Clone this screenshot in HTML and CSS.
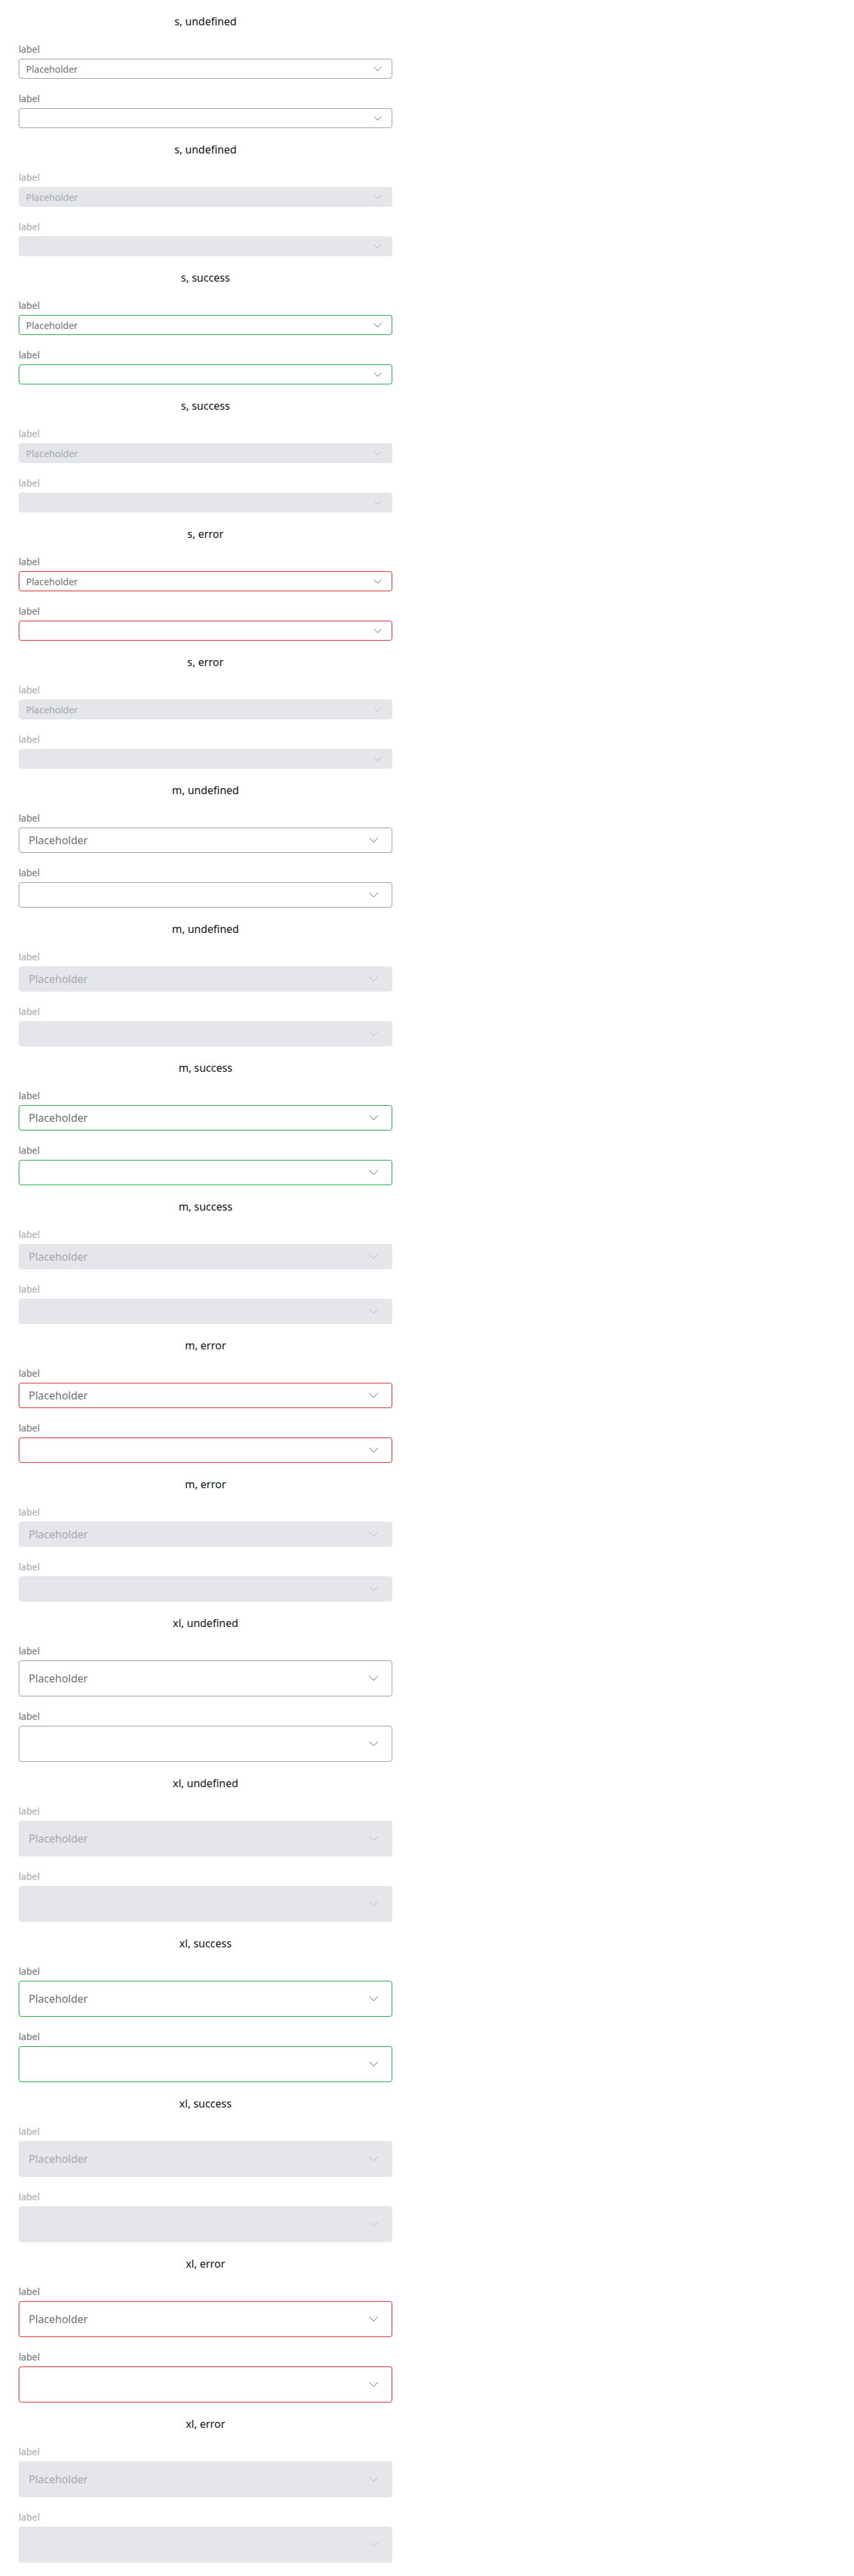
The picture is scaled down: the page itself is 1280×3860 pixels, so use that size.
FILE: index.html
```html
<!DOCTYPE html>
<html lang="en">
<head>
<meta charset="utf-8">
<title>Select variants</title>
<link rel="stylesheet" href="styles.css">
</head>
<body>
<main class="page">

<section class="group size-s">
  <h2 class="title">s, undefined</h2>
  <div class="field"><span class="label">label</span><div class="select"><span class="value">Placeholder</span><svg class="chev" viewBox="0 0 12 7"><polyline points="0.5,0.5 6,6 11.5,0.5"/></svg></div></div>
  <div class="field"><span class="label">label</span><div class="select"><span class="value"></span><svg class="chev" viewBox="0 0 12 7"><polyline points="0.5,0.5 6,6 11.5,0.5"/></svg></div></div>
</section>
<section class="group size-s disabled">
  <h2 class="title">s, undefined</h2>
  <div class="field"><span class="label">label</span><div class="select"><span class="value">Placeholder</span><svg class="chev" viewBox="0 0 12 7"><polyline points="0.5,0.5 6,6 11.5,0.5"/></svg></div></div>
  <div class="field"><span class="label">label</span><div class="select"><span class="value"></span><svg class="chev" viewBox="0 0 12 7"><polyline points="0.5,0.5 6,6 11.5,0.5"/></svg></div></div>
</section>
<section class="group size-s success">
  <h2 class="title">s, success</h2>
  <div class="field"><span class="label">label</span><div class="select"><span class="value">Placeholder</span><svg class="chev" viewBox="0 0 12 7"><polyline points="0.5,0.5 6,6 11.5,0.5"/></svg></div></div>
  <div class="field"><span class="label">label</span><div class="select"><span class="value"></span><svg class="chev" viewBox="0 0 12 7"><polyline points="0.5,0.5 6,6 11.5,0.5"/></svg></div></div>
</section>
<section class="group size-s success disabled">
  <h2 class="title">s, success</h2>
  <div class="field"><span class="label">label</span><div class="select"><span class="value">Placeholder</span><svg class="chev" viewBox="0 0 12 7"><polyline points="0.5,0.5 6,6 11.5,0.5"/></svg></div></div>
  <div class="field"><span class="label">label</span><div class="select"><span class="value"></span><svg class="chev" viewBox="0 0 12 7"><polyline points="0.5,0.5 6,6 11.5,0.5"/></svg></div></div>
</section>
<section class="group size-s error">
  <h2 class="title">s, error</h2>
  <div class="field"><span class="label">label</span><div class="select"><span class="value">Placeholder</span><svg class="chev" viewBox="0 0 12 7"><polyline points="0.5,0.5 6,6 11.5,0.5"/></svg></div></div>
  <div class="field"><span class="label">label</span><div class="select"><span class="value"></span><svg class="chev" viewBox="0 0 12 7"><polyline points="0.5,0.5 6,6 11.5,0.5"/></svg></div></div>
</section>
<section class="group size-s error disabled">
  <h2 class="title">s, error</h2>
  <div class="field"><span class="label">label</span><div class="select"><span class="value">Placeholder</span><svg class="chev" viewBox="0 0 12 7"><polyline points="0.5,0.5 6,6 11.5,0.5"/></svg></div></div>
  <div class="field"><span class="label">label</span><div class="select"><span class="value"></span><svg class="chev" viewBox="0 0 12 7"><polyline points="0.5,0.5 6,6 11.5,0.5"/></svg></div></div>
</section>

<section class="group size-m">
  <h2 class="title">m, undefined</h2>
  <div class="field"><span class="label">label</span><div class="select"><span class="value">Placeholder</span><svg class="chev" viewBox="0 0 14 8"><polyline points="0.5,0.5 7,7 13.5,0.5"/></svg></div></div>
  <div class="field"><span class="label">label</span><div class="select"><span class="value"></span><svg class="chev" viewBox="0 0 14 8"><polyline points="0.5,0.5 7,7 13.5,0.5"/></svg></div></div>
</section>
<section class="group size-m disabled">
  <h2 class="title">m, undefined</h2>
  <div class="field"><span class="label">label</span><div class="select"><span class="value">Placeholder</span><svg class="chev" viewBox="0 0 14 8"><polyline points="0.5,0.5 7,7 13.5,0.5"/></svg></div></div>
  <div class="field"><span class="label">label</span><div class="select"><span class="value"></span><svg class="chev" viewBox="0 0 14 8"><polyline points="0.5,0.5 7,7 13.5,0.5"/></svg></div></div>
</section>
<section class="group size-m success">
  <h2 class="title">m, success</h2>
  <div class="field"><span class="label">label</span><div class="select"><span class="value">Placeholder</span><svg class="chev" viewBox="0 0 14 8"><polyline points="0.5,0.5 7,7 13.5,0.5"/></svg></div></div>
  <div class="field"><span class="label">label</span><div class="select"><span class="value"></span><svg class="chev" viewBox="0 0 14 8"><polyline points="0.5,0.5 7,7 13.5,0.5"/></svg></div></div>
</section>
<section class="group size-m success disabled">
  <h2 class="title">m, success</h2>
  <div class="field"><span class="label">label</span><div class="select"><span class="value">Placeholder</span><svg class="chev" viewBox="0 0 14 8"><polyline points="0.5,0.5 7,7 13.5,0.5"/></svg></div></div>
  <div class="field"><span class="label">label</span><div class="select"><span class="value"></span><svg class="chev" viewBox="0 0 14 8"><polyline points="0.5,0.5 7,7 13.5,0.5"/></svg></div></div>
</section>
<section class="group size-m error">
  <h2 class="title">m, error</h2>
  <div class="field"><span class="label">label</span><div class="select"><span class="value">Placeholder</span><svg class="chev" viewBox="0 0 14 8"><polyline points="0.5,0.5 7,7 13.5,0.5"/></svg></div></div>
  <div class="field"><span class="label">label</span><div class="select"><span class="value"></span><svg class="chev" viewBox="0 0 14 8"><polyline points="0.5,0.5 7,7 13.5,0.5"/></svg></div></div>
</section>
<section class="group size-m error disabled">
  <h2 class="title">m, error</h2>
  <div class="field"><span class="label">label</span><div class="select"><span class="value">Placeholder</span><svg class="chev" viewBox="0 0 14 8"><polyline points="0.5,0.5 7,7 13.5,0.5"/></svg></div></div>
  <div class="field"><span class="label">label</span><div class="select"><span class="value"></span><svg class="chev" viewBox="0 0 14 8"><polyline points="0.5,0.5 7,7 13.5,0.5"/></svg></div></div>
</section>

<section class="group size-xl">
  <h2 class="title">xl, undefined</h2>
  <div class="field"><span class="label">label</span><div class="select"><span class="value">Placeholder</span><svg class="chev" viewBox="0 0 14 8"><polyline points="0.5,0.5 7,7 13.5,0.5"/></svg></div></div>
  <div class="field"><span class="label">label</span><div class="select"><span class="value"></span><svg class="chev" viewBox="0 0 14 8"><polyline points="0.5,0.5 7,7 13.5,0.5"/></svg></div></div>
</section>
<section class="group size-xl disabled">
  <h2 class="title">xl, undefined</h2>
  <div class="field"><span class="label">label</span><div class="select"><span class="value">Placeholder</span><svg class="chev" viewBox="0 0 14 8"><polyline points="0.5,0.5 7,7 13.5,0.5"/></svg></div></div>
  <div class="field"><span class="label">label</span><div class="select"><span class="value"></span><svg class="chev" viewBox="0 0 14 8"><polyline points="0.5,0.5 7,7 13.5,0.5"/></svg></div></div>
</section>
<section class="group size-xl success">
  <h2 class="title">xl, success</h2>
  <div class="field"><span class="label">label</span><div class="select"><span class="value">Placeholder</span><svg class="chev" viewBox="0 0 14 8"><polyline points="0.5,0.5 7,7 13.5,0.5"/></svg></div></div>
  <div class="field"><span class="label">label</span><div class="select"><span class="value"></span><svg class="chev" viewBox="0 0 14 8"><polyline points="0.5,0.5 7,7 13.5,0.5"/></svg></div></div>
</section>
<section class="group size-xl success disabled">
  <h2 class="title">xl, success</h2>
  <div class="field"><span class="label">label</span><div class="select"><span class="value">Placeholder</span><svg class="chev" viewBox="0 0 14 8"><polyline points="0.5,0.5 7,7 13.5,0.5"/></svg></div></div>
  <div class="field"><span class="label">label</span><div class="select"><span class="value"></span><svg class="chev" viewBox="0 0 14 8"><polyline points="0.5,0.5 7,7 13.5,0.5"/></svg></div></div>
</section>
<section class="group size-xl error">
  <h2 class="title">xl, error</h2>
  <div class="field"><span class="label">label</span><div class="select"><span class="value">Placeholder</span><svg class="chev" viewBox="0 0 14 8"><polyline points="0.5,0.5 7,7 13.5,0.5"/></svg></div></div>
  <div class="field"><span class="label">label</span><div class="select"><span class="value"></span><svg class="chev" viewBox="0 0 14 8"><polyline points="0.5,0.5 7,7 13.5,0.5"/></svg></div></div>
</section>
<section class="group size-xl error disabled">
  <h2 class="title">xl, error</h2>
  <div class="field"><span class="label">label</span><div class="select"><span class="value">Placeholder</span><svg class="chev" viewBox="0 0 14 8"><polyline points="0.5,0.5 7,7 13.5,0.5"/></svg></div></div>
  <div class="field"><span class="label">label</span><div class="select"><span class="value"></span><svg class="chev" viewBox="0 0 14 8"><polyline points="0.5,0.5 7,7 13.5,0.5"/></svg></div></div>
</section>

</main>
</body>
</html>
```

FILE: styles.css
```css
* {
  box-sizing: border-box;
}

html, body {
  margin: 0;
  padding: 0;
  background: #ffffff;
}

body {
  font-family: "Noto Sans", "Open Sans", "Liberation Sans", sans-serif;
  color: #111111;
}

.page {
  width: 560px;
  margin-left: 28px;
  padding-bottom: 20px;
}

.group {
  display: flex;
  flex-direction: column;
  gap: 20px;
  padding-top: 20px;
}

.title {
  margin: 0;
  font-size: 16px;
  font-weight: 400;
  line-height: 24px;
  text-align: center;
  color: #111111;
}

.field {
  display: flex;
  flex-direction: column;
  gap: 4px;
}

.label {
  font-size: 14px;
  line-height: 20px;
  color: #6b6f78;
}

.select {
  display: flex;
  align-items: center;
  justify-content: space-between;
  border: 1px solid #9a9ca3;
  border-radius: 4px;
  background: #ffffff;
  color: #6b6f78;
}

.value {
  white-space: nowrap;
}

.chev {
  display: block;
  flex: none;
  fill: none;
  stroke: #6b6f78;
  stroke-width: 1;
}

/* sizes */
.size-s .select {
  height: 30px;
  padding: 0 15px 0 10px;
  font-size: 14px;
}
.size-s .chev {
  width: 12px;
  height: 7px;
}

.size-m .select {
  height: 38px;
  padding: 0 20px 0 14px;
  font-size: 16px;
}
.size-m .chev,
.size-xl .chev {
  width: 14px;
  height: 8px;
}

.size-xl .select {
  height: 54px;
  padding: 0 20px 0 14px;
  font-size: 16px;
}

/* statuses */
.success .select {
  border-color: #1ea34a;
}
.error .select {
  border-color: #e0242b;
}

/* disabled */
.disabled .label {
  color: #a3a6ad;
}
.disabled .select {
  background: #e5e6ea;
  border-color: #e5e6ea;
  color: #a3a6ad;
}
.disabled .chev {
  stroke: #b3b6bc;
}
```
